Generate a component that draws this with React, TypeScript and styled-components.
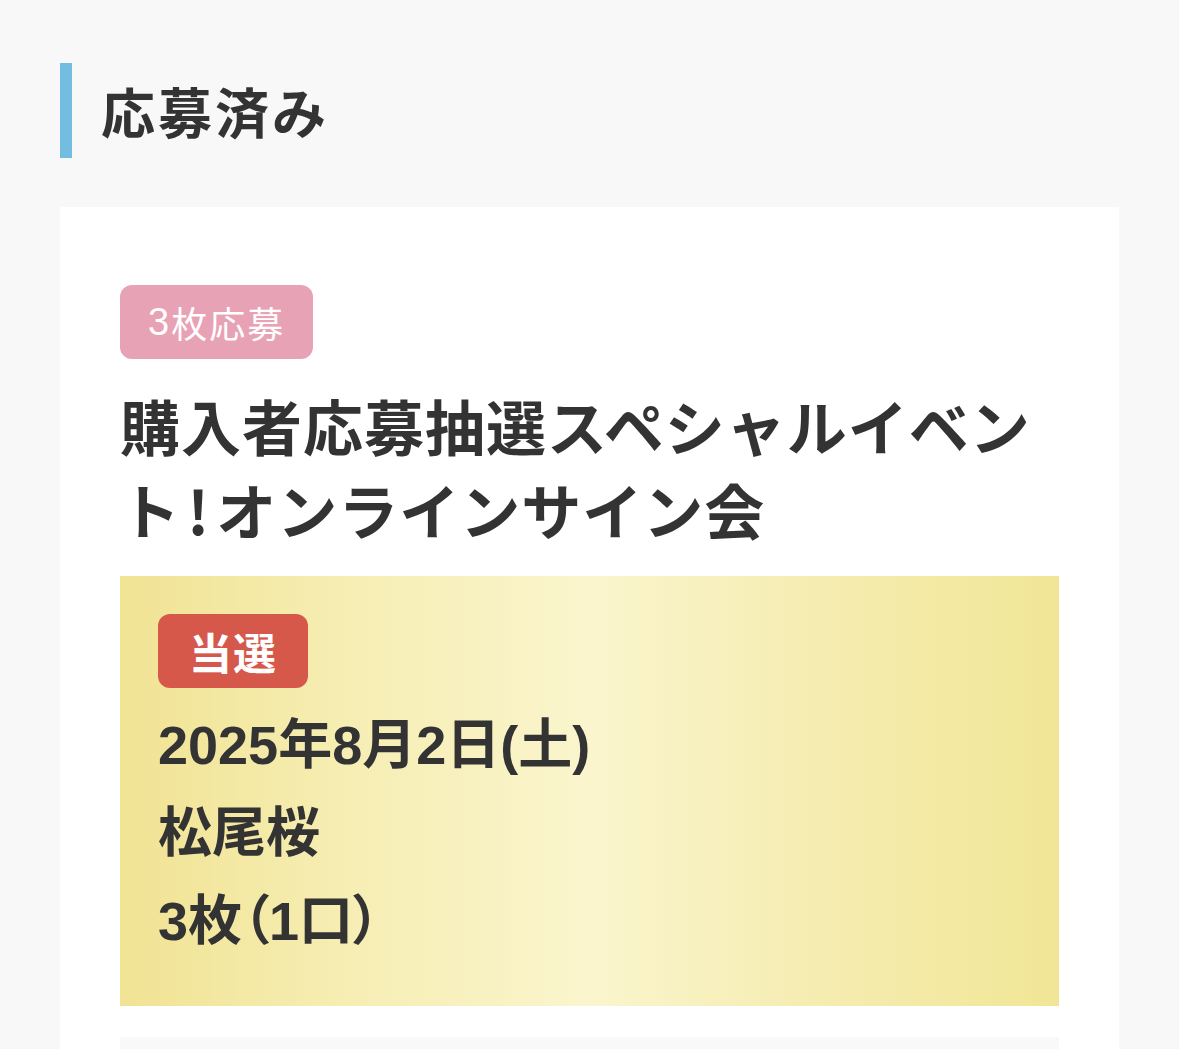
import styled, { createGlobalStyle } from 'styled-components';

const GlobalStyle = createGlobalStyle`
	html, body {
		margin: 0;
		padding: 0;
		background-color: #f8f8f8;
	}
	body {
		font-family: 'Liberation Sans', 'Noto Sans CJK JP', sans-serif;
		color: #333;
	}
	* {
		box-sizing: border-box;
	}
`;

const Page = styled.div`
	padding: 63px 60px 0;
	display: flex;
	flex-direction: column;
	gap: 49px;
`;
const SectionTitle = styled.h2`
	margin: 0;
	height: 95px;
	display: flex;
	align-items: center;
	padding-left: 29px;
	border-left: 12px solid #72bde0;
	font-family: 'Noto Sans CJK JP', sans-serif;
	font-size: 54px;
	font-weight: 700;
	letter-spacing: 3px;
	color: #333;
`;
const Card = styled.section`
	background-color: #fff;
	padding: 78px 60px 0;
	display: flex;
	flex-direction: column;
	align-items: flex-start;
`;
const Tag = styled.span<{ $bg: string; $bold?: boolean }>`
	display: inline-flex;
	align-items: center;
	justify-content: center;
	height: 74px;
	border-radius: 12px;
	background-color: ${(p) => p.$bg};
	color: #fff;
	font-family: 'Noto Sans CJK JP', sans-serif;
	font-weight: ${(p) => (p.$bold ? 700 : 400)};
`;
const EntryTag = styled(Tag)`
	padding: 0 28px;
	font-size: 36px;
	letter-spacing: 2px;
	> b {
		font-family: 'Liberation Sans', sans-serif;
		font-weight: 400;
		font-size: 38px;
	}
`;
const ResultTag = styled(Tag)`
	padding: 0 31px;
	font-size: 43px;
	letter-spacing: 1px;
`;
const EventTitle = styled.h3`
	margin: 24px 0 0;
	font-family: 'Noto Sans CJK JP', sans-serif;
	font-size: 60px;
	font-weight: 700;
	line-height: 84px;
	letter-spacing: 1px;
	color: #333;
	> span {
		margin: 0 6px;
	}
`;
const ResultBox = styled.div`
	align-self: stretch;
	margin-top: 25px;
	padding: 38px 38px 41px;
	background: linear-gradient(90deg, #f1e394 0%, #f6eeb4 25%, #faf5cd 50%, #f5ecb0 75%, #f1e696 100%);
	display: flex;
	flex-direction: column;
	align-items: flex-start;
`;
const DetailList = styled.dl`
	margin: 13px 0 0;
	> dd {
		margin: 0;
		font-size: 54px;
		font-weight: 700;
		line-height: 88px;
		color: #333;
		font-feature-settings: 'palt';
	}
`;
const NextBox = styled.div`
	align-self: stretch;
	margin-top: 31px;
	height: 40px;
	background-color: #f9f9f9;
`;

const detail = {
	date: '2025年8月2日(土)',
	member: '松尾桜',
	count: '3枚（1口）',
};

export default function App() {
	return (
		<>
			<GlobalStyle />
			<Page>
				<SectionTitle>応募済み</SectionTitle>
				<Card>
					<EntryTag $bg={'#e8a2b5'}>
						<b>3</b>枚応募
					</EntryTag>
					<EventTitle>
						購入者応募抽選スペシャルイベント<span>!</span>オンラインサイン会
					</EventTitle>
					<ResultBox>
						<ResultTag $bg={'#d6584b'} $bold>
							当選
						</ResultTag>
						<DetailList>
							<dd>{detail.date}</dd>
							<dd>{detail.member}</dd>
							<dd>{detail.count}</dd>
						</DetailList>
					</ResultBox>
					<NextBox />
				</Card>
			</Page>
		</>
	);
}
